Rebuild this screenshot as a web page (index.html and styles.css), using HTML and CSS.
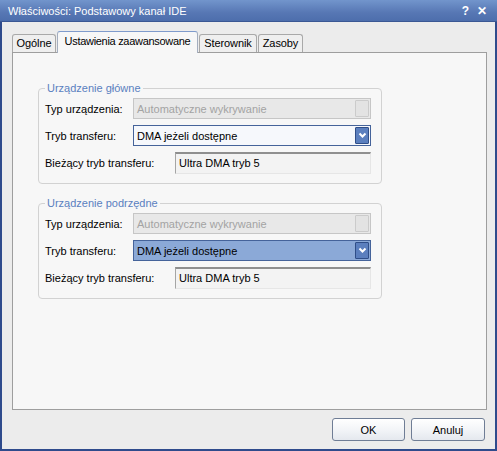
FILE: index.html
```html
<!DOCTYPE html>
<html lang="pl">
<head>
<meta charset="utf-8">
<title>Właściwości: Podstawowy kanał IDE</title>
<link rel="stylesheet" href="styles.css">
</head>
<body>
<div class="window">
  <div class="titlebar">
    <span class="title">Właściwości: Podstawowy kanał IDE</span>
    <span class="tb-buttons"><span class="tb-help">?</span><span class="tb-close">✕</span></span>
  </div>
  <div class="content">
    <div class="tabs">
      <div class="tab tab-general">Ogólne</div>
      <div class="tab tab-advanced active">Ustawienia zaawansowane</div>
      <div class="tab tab-driver">Sterownik</div>
      <div class="tab tab-resources">Zasoby</div>
    </div>
    <div class="panel">
      <fieldset class="group">
        <legend>Urządzenie główne</legend>
        <div class="rows">
          <div class="row">
            <span class="label">Typ urządzenia:</span>
            <div class="combo disabled"><span class="combo-text">Automatyczne wykrywanie</span><span class="combo-btn"></span></div>
          </div>
          <div class="row">
            <span class="label">Tryb transferu:</span>
            <div class="combo"><span class="combo-text">DMA jeżeli dostępne</span><span class="combo-btn"><svg width="9" height="7" viewBox="0 0 9 7"><path d="M1.5 1.5 L4.5 4.5 L7.5 1.5" fill="none" stroke="#fff" stroke-width="2"/></svg></span></div>
          </div>
          <div class="row row-wide">
            <span class="label">Bieżący tryb transferu:</span>
            <div class="textbox">Ultra DMA tryb 5</div>
          </div>
        </div>
      </fieldset>
      <fieldset class="group">
        <legend>Urządzenie podrzędne</legend>
        <div class="rows">
          <div class="row">
            <span class="label">Typ urządzenia:</span>
            <div class="combo disabled"><span class="combo-text">Automatyczne wykrywanie</span><span class="combo-btn"></span></div>
          </div>
          <div class="row">
            <span class="label">Tryb transferu:</span>
            <div class="combo selected"><span class="combo-text">DMA jeżeli dostępne</span><span class="combo-btn"><svg width="9" height="7" viewBox="0 0 9 7"><path d="M1.5 1.5 L4.5 4.5 L7.5 1.5" fill="none" stroke="#fff" stroke-width="2"/></svg></span></div>
          </div>
          <div class="row row-wide">
            <span class="label">Bieżący tryb transferu:</span>
            <div class="textbox">Ultra DMA tryb 5</div>
          </div>
        </div>
      </fieldset>
    </div>
    <div class="buttons">
      <button class="btn btn-ok">OK</button>
      <button class="btn">Anuluj</button>
    </div>
  </div>
</div>
</body>
</html>
```
FILE: styles.css
```css
* { box-sizing: border-box; }
html, body { margin: 0; padding: 0; }
body {
  font-family: "Liberation Sans", Arial, sans-serif;
  font-size: 11px;
  color: #000;
  background: #ececec;
}
.window {
  width: 497px;
  height: 451px;
  display: flex;
  flex-direction: column;
  border-left: 2px solid #2f4b8c;
  border-right: 2px solid #2f4b8c;
  border-bottom: 2px solid #2f4b8c;
  background: #ececec;
}
.titlebar {
  height: 22px;
  flex: none;
  margin: 0 -2px;
  padding: 0 10px 0 8px;
  display: flex;
  align-items: center;
  justify-content: space-between;
  background: linear-gradient(#7295cc, #5777b4 60%, #4d6eac);
  border-bottom: 1px solid #3b5894;
  color: #fff;
}
.title { font-size: 11px; }
.tb-buttons { display: flex; gap: 8px; font-weight: bold; font-size: 12px; }
.content {
  flex: 1;
  display: flex;
  flex-direction: column;
  padding: 9px 8px 8px 10px;
}
.tabs {
  display: flex;
  align-items: flex-end;
  height: 21px;
  flex: none;
}
.tab {
  height: 18px;
  line-height: 17px;
  padding: 0;
  text-align: center;
  white-space: nowrap;
  border: 1px solid #a9a9a9;
  border-bottom: none;
  border-radius: 3px 3px 0 0;
  background: #efefef;
  margin-left: 1px;
  letter-spacing: -0.1px;
}
.tab-general { margin-left: 0; width: 44px; }
.tab-advanced { width: 141px; letter-spacing: -0.3px; }
.tab-driver { width: 58px; }
.tab-resources { width: 45px; }
.tab.active {
  height: 22px;
  margin-bottom: -1px;
  position: relative;
  background: #f7f7f7;
  border-color: #a4aebf;
  border-top: 1px solid #7f9bcc;
  line-height: 18px;
}
.panel {
  flex: 1;
  background: #f7f7f7;
  border: 1px solid #9e9e9e;
  padding: 29px 0 0 25px;
  display: flex;
  flex-direction: column;
  gap: 13px;
}
.group {
  width: 344px;
  margin: 0;
  border: 1px solid #d2d2d2;
  border-radius: 4px;
  padding: 3px 10px 10px 6px;
}
.group legend {
  color: #5a80c0;
  padding: 0 2px;
  line-height: 13px;
}
.rows { display: flex; flex-direction: column; gap: 6px; }
.row {
  display: flex;
  align-items: center;
  height: 21px;
}
.label { width: 88px; flex: none; }
.row-wide .label { width: 130px; }
.combo {
  flex: 1;
  height: 21px;
  display: flex;
  align-items: center;
  border: 1px solid #45639a;
  background: #f6f8fc;
  padding: 0 1px 0 3px;
}
.combo-text { flex: 1; }
.combo-btn {
  width: 14px;
  height: 17px;
  display: flex;
  align-items: center;
  justify-content: center;
  background: #5b7fbe;
  border: 1px solid #2f4e88;
  border-radius: 1px;
}
.combo.disabled {
  border-color: #c6c6c6;
  background: #e8e8e8;
  color: #a3a3a3;
}
.combo.disabled .combo-btn {
  background: #e3e3e3;
  border-color: #cbcbcb;
}
.combo.selected {
  background: #8ba9d7;
}
.textbox {
  flex: 1;
  height: 22px;
  line-height: 19px;
  padding-left: 3px;
  background: #f3f3f3;
  border-top: 2px solid #8f8f8f;
  border-left: 1px solid #a5a5a5;
  border-right: 1px solid #e6e6e6;
  border-bottom: 1px solid #e6e6e6;
}
.buttons {
  flex: none;
  display: flex;
  justify-content: flex-end;
  gap: 6px;
  padding: 8px 2px 0 0;
}
.btn {
  width: 74px;
  height: 23px;
  font-family: "Liberation Sans", Arial, sans-serif;
  font-size: 11px;
  color: #000;
  border: 1px solid #6f7d95;
  border-radius: 3px;
  background: linear-gradient(#ffffff, #f3f5f8 50%, #e4e8ee);
  padding: 0;
}
.btn-ok { width: 73px; }
```
